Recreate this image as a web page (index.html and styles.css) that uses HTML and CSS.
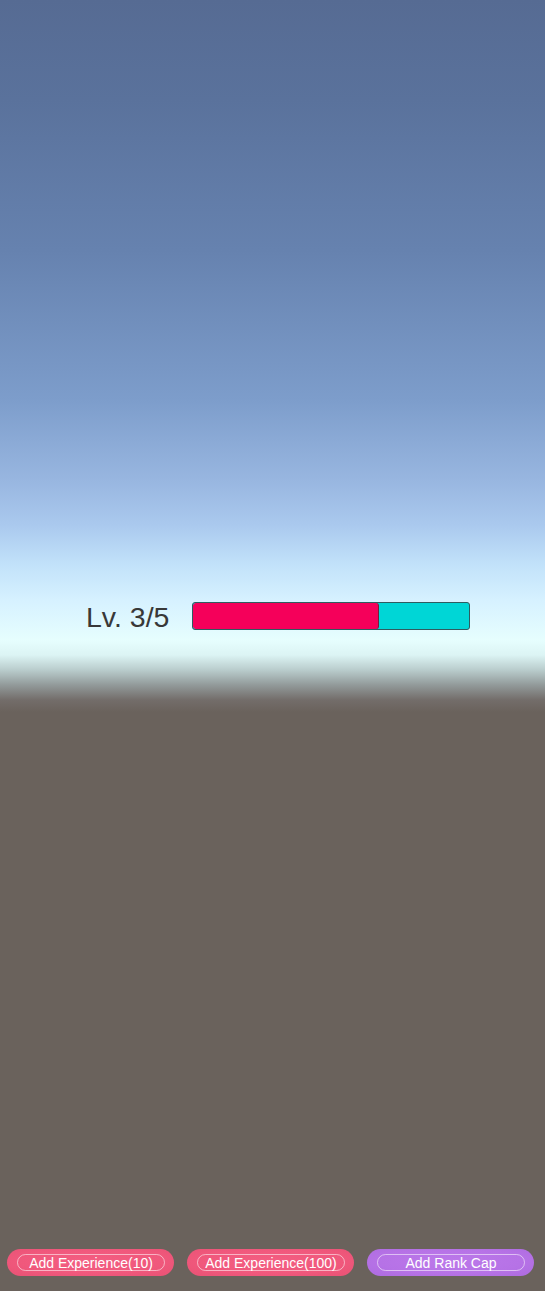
FILE: index.html
```html
<!DOCTYPE html>
<html lang="en">
<head>
<meta charset="utf-8">
<title>Level</title>
<link rel="stylesheet" href="styles.css">
</head>
<body>
<div class="screen">
  <div class="hud">
    <div class="level">Lv. 3/5</div>
    <div class="bar">
      <div class="bar-fill" style="width: 67.5%"></div>
    </div>
  </div>
  <div class="spacer"></div>
  <div class="buttons">
    <button class="btn btn-red"><span class="btn-inner">Add Experience(10)</span></button>
    <button class="btn btn-red"><span class="btn-inner">Add Experience(100)</span></button>
    <button class="btn btn-purple"><span class="btn-inner">Add Rank Cap</span></button>
  </div>
</div>
</body>
</html>
```

FILE: styles.css
```css
html, body {
  margin: 0;
  padding: 0;
}

body {
  width: 545px;
  height: 1291px;
  overflow: hidden;
  font-family: "Liberation Sans", Arial, sans-serif;
}

.screen {
  height: 1291px;
  display: flex;
  flex-direction: column;
  background: linear-gradient(to bottom,
    #566b93 0px,
    #5a729c 100px,
    #6682af 250px,
    #7d9dcb 400px,
    #98b6e0 480px,
    #aac9ee 525px,
    #c2e2fa 565px,
    #d6f1ff 600px,
    #e6fefe 640px,
    #dcf4f4 655px,
    #b9cccc 670px,
    #929a9a 685px,
    #736d6a 700px,
    #6a625c 712px,
    #6a625c 100%);
}

.hud {
  margin-top: 602px;
  height: 28px;
  display: flex;
  align-items: center;
  gap: 22px;
  padding-left: 86px;
}

.level {
  font-size: 28.5px;
  line-height: 28px;
  padding-top: 2px;
  color: #383838;
  width: 84px;
  white-space: nowrap;
}

.bar {
  width: 276px;
  height: 26px;
  border: 1px solid #2f5c60;
  border-radius: 3px;
  background: #00d6d6;
  overflow: hidden;
  display: flex;
}

.bar-fill {
  height: 100%;
  background: #f5005a;
  border-right: 1px solid #7a1b3a;
  border-radius: 3px;
  box-sizing: border-box;
}

.spacer {
  flex: 1;
}

.buttons {
  display: flex;
  gap: 13px;
  padding-left: 7px;
  margin-bottom: 15px;
}

.btn {
  width: 167px;
  height: 27px;
  border: none;
  border-radius: 14px;
  padding: 5px 9px 5px 10px;
  margin: 0;
  display: flex;
  box-sizing: border-box;
  cursor: pointer;
}

.btn-red {
  background: radial-gradient(ellipse at 50% 45%, #f45e82 0%, #f0587c 60%, #e85274 100%);
}

.btn-purple {
  background: radial-gradient(ellipse at 50% 45%, #bc78ea 0%, #b672e6 60%, #ad6be0 100%);
}

.btn-inner {
  flex: 1;
  display: flex;
  align-items: center;
  justify-content: center;
  border: 1px solid rgba(255, 255, 255, 0.55);
  border-radius: 9px;
  color: #ffffff;
  font-family: "Liberation Sans", Arial, sans-serif;
  font-size: 14px;
  line-height: 14px;
  white-space: nowrap;
}
```
